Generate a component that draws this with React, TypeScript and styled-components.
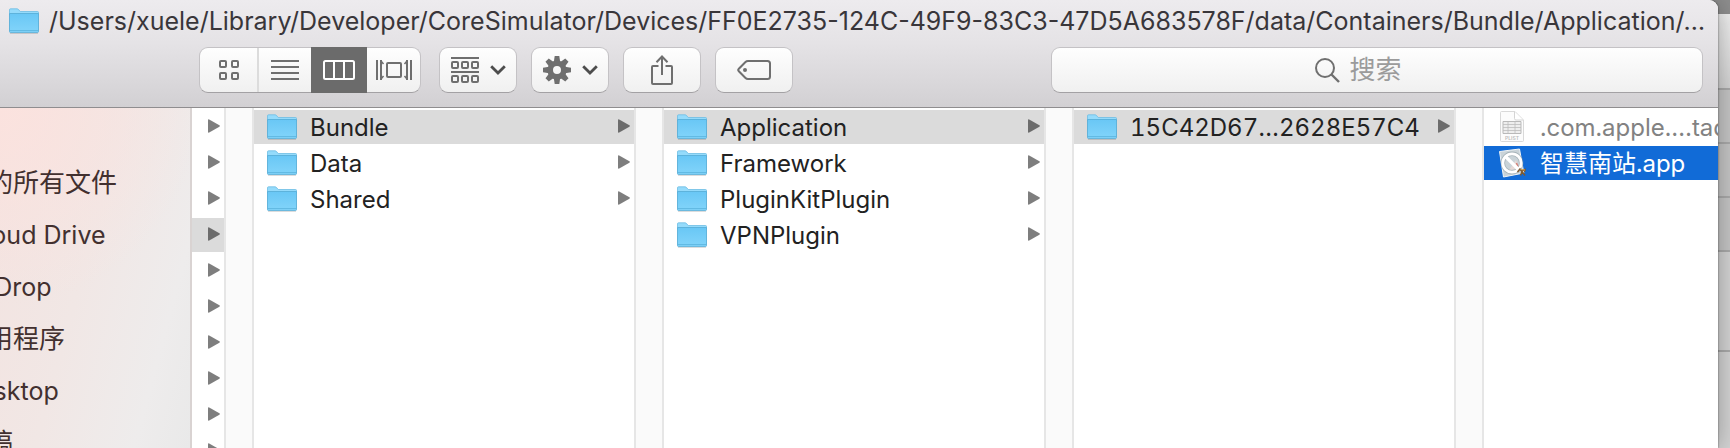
import React from "react";
import styled, { createGlobalStyle, css } from "styled-components";

const GlobalStyle = createGlobalStyle`
  * { box-sizing: border-box; }
  body {
    margin: 0;
    overflow: hidden;
    font-family: Inter, "Noto Sans CJK SC", sans-serif;
  }
  button, input { font-family: inherit; }
`;

const Desktop = styled.div`
  display: flex;
  height: 100vh;
  overflow: hidden;
  background: #8e8e8e;
`;

const FinderWindow = styled.main`
  position: relative;
  flex: 1;
  min-width: 0;
  display: flex;
  flex-direction: column;
  overflow: hidden;
  border-top-right-radius: 9px;
  background: #fff;
  box-shadow: 0 0 2px rgba(0, 0, 0, 0.6), 0 0 24px rgba(0, 0, 0, 0.3);
`;

const BackWindow = styled.div`
  flex: 0 0 12px;
  display: flex;
  flex-direction: column;
  padding-top: 14px;
`;

const Band = styled.div<{ $h?: number; $bg: string }>`
  ${(p) => (p.$h ? css`height: ${p.$h}px; border-bottom: 2px solid #a9a9a9;` : css`flex: 1;`)}
  background: ${(p) => p.$bg};
`;

const Header = styled.header`
  flex: none;
  height: 108px;
  border-bottom: 1px solid #8f8d8f;
  background: linear-gradient(#edebee, #e5e3e6 40%, #d2d0d3);
`;

const TitleBar = styled.div`
  display: flex;
  align-items: center;
  gap: 10px;
  height: 47px;
  padding: 0 12px 5px 9px;
`;

const Title = styled.h1`
  margin: 0;
  font-size: 25px;
  line-height: 32px;
  font-weight: 400;
  color: #39363a;
  white-space: nowrap;
`;

const Toolbar = styled.div`
  display: flex;
  gap: 14px;
  padding: 0 15px 0 199px;
`;

const control = css`
  height: 46px;
  border: 1px solid #c4c2c5;
  border-bottom-color: #a3a1a4;
  border-radius: 9px;
  background: linear-gradient(#fefefe, #f0f0f0);
`;

const Segments = styled.div`
  ${control}
  display: flex;
  width: 222px;
  margin-right: 4px;
`;

const Segment = styled.button<{ $w: number; $on?: boolean; $line?: boolean }>`
  display: flex;
  align-items: center;
  justify-content: center;
  flex: 0 0 ${(p) => p.$w}px;
  padding: 0;
  border: 0;
  border-right: ${(p) => (p.$line ? "2px solid #dcdcdc" : "0")};
  margin: ${(p) => (p.$on ? "-1px 0" : "0")};
  background: ${(p) => (p.$on ? "#6b6b6b" : "transparent")};
`;

const ToolButton = styled.button`
  ${control}
  display: flex;
  align-items: center;
  justify-content: center;
  gap: 11px;
  flex: 0 0 78px;
  padding: 0;
`;

const Search = styled.label`
  ${control}
  display: flex;
  flex: 1;
  align-items: center;
  justify-content: center;
  gap: 10px;
  margin-left: 244px;
`;

const SearchInput = styled.input`
  width: 90px;
  padding: 0;
  border: 0;
  outline: 0;
  background: transparent;
  font-size: 26px;
  line-height: 36px;
  color: #3d3a3e;
  &::placeholder { color: #9b9b9b; opacity: 1; }
`;

const Body = styled.div`
  flex: 1;
  min-height: 0;
  display: flex;
  overflow: hidden;
`;

const Sidebar = styled.nav`
  flex: 0 0 192px;
  overflow: hidden;
  padding-top: 49px;
  border-right: 2px solid #d9d3d2;
  background:
    radial-gradient(circle at 0 0, rgba(252, 226, 222, 0.9), rgba(252, 226, 222, 0) 200px),
    linear-gradient(105deg, #f3e3e0, #f1e7e5 45%, #eeecec 80%, #e9e9e9);
`;

const Places = styled.ul`
  list-style: none;
  margin: 0 0 0 -39px;
  padding: 0;
`;

const Place = styled.a`
  display: block;
  height: 52px;
  font-size: 25px;
  line-height: 52px;
  white-space: nowrap;
  text-decoration: none;
  color: #42302f;
  &:lang(zh) { font-size: 26px; }
`;

const Column = styled.ul<{ $kind: "tail" | "full" | "last" }>`
  list-style: none;
  margin: 0;
  padding: 2px 0 0;
  display: flex;
  flex-direction: column;
  gap: 2px;
  overflow: hidden;
  flex: ${(p) => ({ tail: "0 0 32px", full: "0 0 380px", last: "1 1 0" })[p.$kind]};
  min-width: 0;
`;

const Gutter = styled.div`
  flex: 0 0 30px;
  border: solid #e6e6e6;
  border-width: 0 2px;
  background: #fafafa;
`;

const Item = styled.li`
  flex: none;
`;

const Row = styled.button<{ $state?: "path" | "active"; $muted?: boolean; $kind?: "tail" | "last" }>`
  display: flex;
  align-items: center;
  justify-content: flex-end;
  gap: 13px;
  width: 100%;
  height: 34px;
  padding: 0 ${(p) => (p.$kind === "last" ? 0 : 4)}px 0 ${(p) => (p.$kind === "tail" ? 0 : 13)}px;
  border: 0;
  text-align: left;
  background: ${(p) => (p.$state === "active" ? "#116bd7" : p.$state === "path" ? "#dbdbdb" : "transparent")};
  color: ${(p) => (p.$state === "active" ? "#fff" : p.$muted ? "#828282" : "#222")};
`;

const Name = styled.span`
  flex: 1;
  min-width: 0;
  overflow: hidden;
  padding-top: 2px;
  font-size: 24px;
  line-height: 32px;
  font-variant-numeric: tabular-nums;
  white-space: nowrap;
`;

const Svg = styled.svg`
  display: block;
  flex: none;
`;

const INK = "#6f6f6f";

const Folder = () => (
  <Svg width="30" height="26" viewBox="0 0 30 26" aria-hidden="true">
    <defs>
      <linearGradient id="folder" x1="0" y1="0" x2="0" y2="1">
        <stop offset="0" stopColor="#69c7f5" />
        <stop offset="1" stopColor="#82d4fa" />
      </linearGradient>
    </defs>
    <path d="M1 25.2h28" stroke="#000" strokeOpacity=".2" />
    <path d="M.5 5V1.8Q.5.8 1.5.8H8Q9 .8 9.8 1.8L11.2 3.5H28.5Q29.5 3.5 29.5 4.5V7H.5z" fill="#95dbfb" stroke="#6dbde3" strokeWidth=".8" />
    <path d="M.5 5.5h29v18q0 .9-.9.9H1.4q-.9 0-.9-.9z" fill="url(#folder)" stroke="#59afd8" strokeWidth=".9" />
    <path d="M1 22.5h28" stroke="#5bb4dd" strokeWidth=".8" />
  </Svg>
);

const Triangle = ({ dark }: { dark?: boolean }) => (
  <Svg width="12" height="16" viewBox="0 0 12 16" aria-hidden="true">
    <path d="M0 1.2Q0 0 1.2.5L11.4 6.3Q12.4 7 11.4 7.7L1.2 13.6Q0 14 0 13z" fill={dark ? "#6c6c6c" : "#7e7e7e"} />
  </Svg>
);

const Chevron = () => (
  <Svg width="16" height="10" viewBox="0 0 16 10" aria-hidden="true">
    <path d="M1.2 1.2 8 8 14.8 1.2" fill="none" stroke="#4d4d4d" strokeWidth="2.8" />
  </Svg>
);

const GridIcon = () => (
  <Svg width="20" height="20" viewBox="0 0 20 20" fill="none" stroke={INK} strokeWidth="2" aria-hidden="true">
    {[1, 13].map((y) => [1, 13].map((x) => <rect key={`${x}-${y}`} x={x} y={y} width="6" height="6" rx="1" />))}
  </Svg>
);

const ListIcon = () => (
  <Svg width="28" height="20" viewBox="0 0 28 20" aria-hidden="true">
    <path d="M0 1h28M0 7h28M0 13h28M0 19h28" stroke={INK} strokeWidth="2" />
  </Svg>
);

const ColumnsIcon = () => (
  <Svg width="32" height="20" viewBox="0 0 32 20" fill="none" stroke="#fff" strokeWidth="2" aria-hidden="true">
    <rect x="1" y="1" width="30" height="18" rx="1.5" />
    <path d="M11 1v18M21 1v18" />
  </Svg>
);

const FlowIcon = () => (
  <Svg width="36" height="20" viewBox="0 0 36 20" fill="none" stroke={INK} strokeWidth="2" aria-hidden="true">
    <path d="M1 0v20M5 0v20M31 0v20M35 0v20" />
    <path d="M5 1 7.5 4M5 19l2.500-3M31 1 28.500 4M31 19l-2.500-3" strokeWidth="1.500" />
    <rect x="11" y="3" width="14" height="14" rx="1" />
  </Svg>
);

const GroupIcon = () => (
  <Svg width="28" height="26" viewBox="0 0 28 26" fill="none" stroke={INK} strokeWidth="2" aria-hidden="true">
    <path d="M0 1h28M0 15h28" />
    {[5, 19].map((y) => [1, 11, 21].map((x) => <rect key={`${x}-${y}`} x={x} y={y} width="6" height="6" rx="1" />))}
  </Svg>
);

const GearIcon = () => (
  <Svg width="28" height="28" viewBox="-14 -14 28 28" aria-hidden="true">
    {[0, 45, 90, 135, 180, 225, 270, 315].map((a) => (
      <path key={a} d="M-3.200-8-2.300-14H2.300L3.200-8z" transform={`rotate(${a})`} fill={INK} />
    ))}
    <circle r="6.800" fill="none" stroke={INK} strokeWidth="5.600" />
  </Svg>
);

const ShareIcon = () => (
  <Svg width="22" height="32" viewBox="0 0 22 32" fill="none" stroke={INK} strokeWidth="2" aria-hidden="true">
    <path d="M7.500 12H2q-1 0-1 1v16q0 1 1 1h18q1 0 1-1V13q0-1-1-1h-5.500" />
    <path d="M11 21V3M5.500 8.200 11 2.500l5.500 5.700" />
  </Svg>
);

const TagIcon = () => (
  <Svg width="34" height="20" viewBox="0 0 34 20" aria-hidden="true">
    <path d="M11 1H30.500Q33 1 33 3.500V16.500Q33 19 30.500 19H11Q9.500 19 8.500 18L1.600 11Q.8 10 1.600 9L8.500 2Q9.500 1 11 1z" fill="none" stroke={INK} strokeWidth="2" />
    <circle cx="8" cy="10" r="2" fill={INK} />
  </Svg>
);

const SearchIcon = () => (
  <Svg width="25" height="25" viewBox="0 0 25 25" fill="none" stroke={INK} strokeWidth="2" aria-hidden="true">
    <circle cx="10" cy="10" r="9" />
    <path d="M16.500 16.500 24 24" strokeWidth="2.400" />
  </Svg>
);

const PlistIcon = () => (
  <Svg width="30" height="32" viewBox="0 0 30 32" aria-hidden="true">
    <path d="M3.500 1.500q0-1 1-1H18L26.500 9V29.500q0 1-1 1h-21q-1 0-1-1z" fill="#fcfcfc" stroke="#d9d9d9" />
    <path d="M17.500.8V7.500q0 1.500 1.500 1.500h7" fill="#fff" stroke="#d4d4d4" />
    <path d="M6 10.500h18v12H6z" fill="#eee" stroke="#b9b9b9" />
    <path d="M6 13.500h18M6 16.500h18M6 19.500h18M11 10.500v12M18 10.500v12" stroke="#bdbdbd" strokeWidth=".8" />
    <text x="15" y="28.500" textAnchor="middle" fontSize="5" fontWeight="600" fill="#bcbcbc">PLIST</text>
  </Svg>
);

const AppIcon = () => (
  <Svg width="30" height="32" viewBox="0 0 30 32" aria-hidden="true">
    <path d="M2.500 4.500 22.500 2 26.800 26 6.500 30z" fill="#c9d3d8" stroke="#f2f5f6" />
    <path d="M19 13 22.500 22 12 23z" fill="#e5d9d6" />
    <path d="M19.500 16l1.500 4" stroke="#d57f76" strokeWidth="1.500" />
    <circle cx="15" cy="16" r="9.200" fill="none" stroke="#84939a" strokeWidth="4.400" strokeOpacity=".5" />
    <circle cx="15" cy="16" r="9.200" fill="none" stroke="#fff" strokeWidth="2.800" />
    <path d="M8.500 9.500l13 13" stroke="#fff" strokeWidth="3.200" />
    <path d="M20.500 25l2.500-3 1.500 2 3.500-1.500-.5 2.500M23.500 28.500l1.500-4 3 4" fill="none" stroke="#7c5a31" strokeWidth="1.500" />
    <path d="M23.500 22.500l4.500.5" stroke="#d9a24c" />
  </Svg>
);

const places = [
  { name: "我的所有文件", lang: "zh" },
  { name: "iCloud Drive", lang: "en" },
  { name: "AirDrop", lang: "en" },
  { name: "应用程序", lang: "zh" },
  { name: "Desktop", lang: "en" },
  { name: "文稿", lang: "zh" },
];

const columns = [
  ["Bundle", "Data", "Shared"],
  ["Application", "Framework", "PluginKitPlugin", "VPNPlugin"],
  ["15C42D67…2628E57C4"],
];

export default function App() {
  return (
    <>
      <GlobalStyle />
      <Desktop>
        <FinderWindow>
          <Header>
            <TitleBar>
              <Folder />
              <Title>
                /Users/xuele/Library/Developer/CoreSimulator/Devices/FF0E2735-124C-49F9-83C3-47D5A683578F/data/Containers/Bundle/Application/…
              </Title>
            </TitleBar>
            <Toolbar>
              <Segments role="group" aria-label="View">
                <Segment $w={59} $line aria-label="Icons"><GridIcon /></Segment>
                <Segment $w={52} aria-label="List"><ListIcon /></Segment>
                <Segment $w={56} $on aria-pressed="true" aria-label="Columns"><ColumnsIcon /></Segment>
                <Segment $w={53} aria-label="Cover Flow"><FlowIcon /></Segment>
              </Segments>
              <ToolButton aria-label="Arrange"><GroupIcon /><Chevron /></ToolButton>
              <ToolButton aria-label="Action"><GearIcon /><Chevron /></ToolButton>
              <ToolButton aria-label="Share"><ShareIcon /></ToolButton>
              <ToolButton aria-label="Tags"><TagIcon /></ToolButton>
              <Search>
                <SearchIcon />
                <SearchInput type="text" placeholder="搜索" aria-label="搜索" />
              </Search>
            </Toolbar>
          </Header>
          <Body>
            <Sidebar>
              <Places>
                {places.map((p) => (
                  <li key={p.name}><Place href="#" lang={p.lang}>{p.name}</Place></li>
                ))}
              </Places>
            </Sidebar>
            <Column $kind="tail">
              {Array.from({ length: 10 }, (_, i) => (
                <Item key={i}>
                  <Row $kind="tail" $state={i === 3 ? "path" : undefined} aria-label={`Folder ${i + 1}`}>
                    <Triangle dark={i === 3} />
                  </Row>
                </Item>
              ))}
            </Column>
            <Gutter />
            {columns.map((names) => (
              <React.Fragment key={names[0]}>
                <Column $kind="full">
                  {names.map((name, i) => (
                    <Item key={name}>
                      <Row $state={i === 0 ? "path" : undefined}>
                        <Folder />
                        <Name>{name}</Name>
                        <Triangle dark={i === 0} />
                      </Row>
                    </Item>
                  ))}
                </Column>
                <Gutter />
              </React.Fragment>
            ))}
            <Column $kind="last">
              <Item>
                <Row $kind="last" $muted><PlistIcon /><Name>.com.apple.…tadata.plist</Name></Row>
              </Item>
              <Item>
                <Row $kind="last" $state="active"><AppIcon /><Name>智慧南站.app</Name></Row>
              </Item>
            </Column>
          </Body>
        </FinderWindow>
        <BackWindow>
          <Band $h={76} $bg="linear-gradient(#efefef, #d2d2d2)" />
          <Band $h={54} $bg="#c4c4c4" />
          <Band $h={54} $bg="#c4c4c4" />
          <Band $h={54} $bg="#c4c4c4" />
          <Band $h={100} $bg="#d2d2d2" />
          <Band $bg="#d2d2d2" />
        </BackWindow>
      </Desktop>
    </>
  );
}
